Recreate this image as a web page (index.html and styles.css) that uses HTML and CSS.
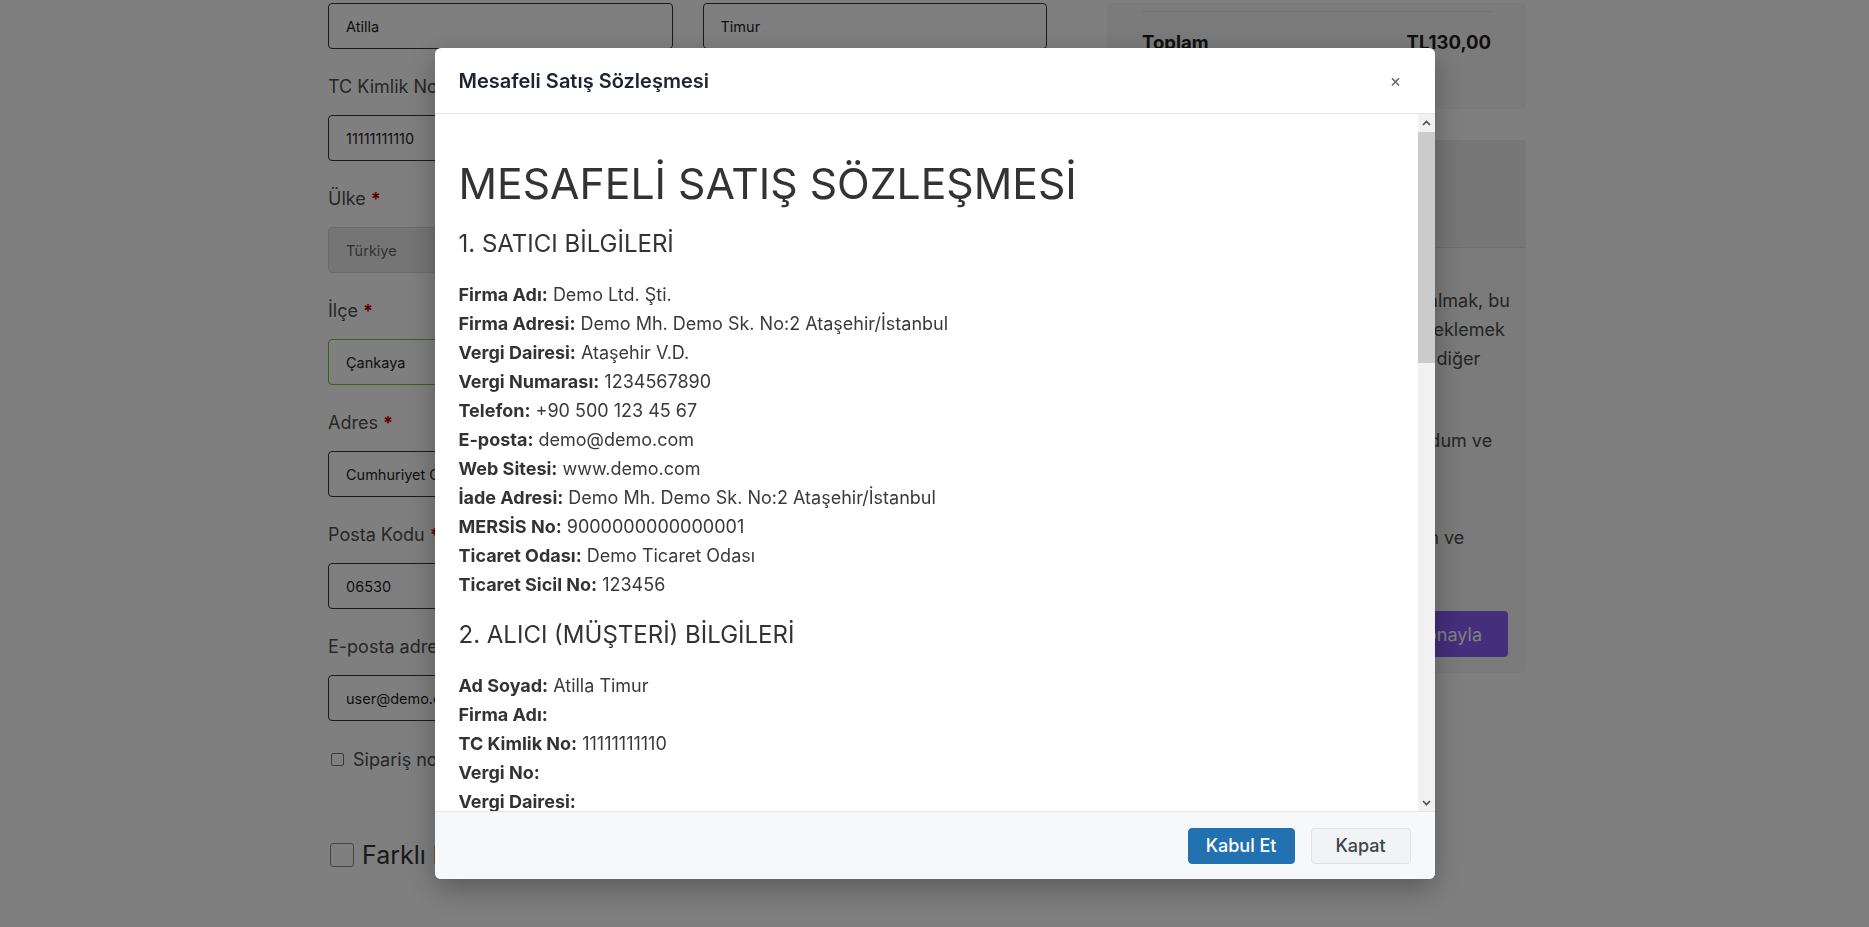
FILE: index.html
```
<!doctype html>
<html lang="tr">
  <head>
    <meta charset="UTF-8" />
    <meta name="viewport" content="width=device-width, initial-scale=1.0" />
    <title>Ödeme</title>

    <link rel="stylesheet" href="styles.css">
  </head>

  <body>
    <div class="checkout">
      <form class="billing">
        <div class="name-row">
          <input class="field-input" type="text" value="Atilla" />
          <input class="field-input" type="text" value="Timur" />
        </div>

        <div class="field">
          <label>TC Kimlik No (bireysel siparişler için)</label>
          <input class="field-input" type="text" value="11111111110" />
        </div>

        <div class="field">
          <label>Ülke <abbr class="required">*</abbr></label>
          <input class="field-input is-disabled" type="text" value="Türkiye" disabled />
        </div>

        <div class="field">
          <label>İlçe <abbr class="required">*</abbr></label>
          <input class="field-input is-valid" type="text" value="Çankaya" />
        </div>

        <div class="field">
          <label>Adres <abbr class="required">*</abbr></label>
          <input class="field-input" type="text" value="Cumhuriyet Coşkun Sk. No:12 Daire:4" />
        </div>

        <div class="field">
          <label>Posta Kodu <abbr class="required">*</abbr></label>
          <input class="field-input" type="text" value="06530" />
        </div>

        <div class="field">
          <label>E-posta adresi <abbr class="required">*</abbr></label>
          <input class="field-input" type="text" value="user@demo.com" />
        </div>

        <label class="check-row">
          <input class="check-small" type="checkbox" />
          <span>Sipariş notu eklemek istiyorum</span>
        </label>

        <label class="ship-row">
          <input class="check-big" type="checkbox" />
          <span>Farklı bir adrese gönderilsin mi?</span>
        </label>
      </form>

      <aside class="sidebar">
        <div class="card totals">
          <div class="total-row">
            <span>Toplam</span>
            <span>TL130,00</span>
          </div>
        </div>

        <div class="card payment">
          <div class="payment-head"></div>
          <div class="payment-body">
            <p class="privacy">
              Kişisel verileriniz siparişinizi işleme almak, bu<br />
              web sitesi içindeki deneyiminizi desteklemek<br />
              ve gizlilik politikamızda da açıklanan diğer<br />
              amaçlarla kullanılacaktır.
            </p>
            <p class="terms">
              Web site şartlarını ve koşullarını okudum ve<br />
              kabul ediyorum.
            </p>
            <p class="terms terms-second">
              Mesafeli Satış Sözleşmesi'ni okudum ve<br />
              kabul ediyorum.
            </p>
            <div class="place-order">
              <button type="button">Siparişi onayla</button>
            </div>
          </div>
        </div>
      </aside>
    </div>

    <div class="backdrop"></div>

    <div class="modal">
      <div class="modal-dialog">
        <div class="modal-header">
          <h5 class="modal-title">Mesafeli Satış Sözleşmesi</h5>
          <button class="modal-close" type="button">&times;</button>
        </div>

        <div class="modal-body">
          <div class="contract">
            <h1>MESAFELİ SATIŞ SÖZLEŞMESİ</h1>

            <h2>1. SATICI BİLGİLERİ</h2>
            <p>
              <strong>Firma Adı:</strong> Demo Ltd. Şti.<br />
              <strong>Firma Adresi:</strong> Demo Mh. Demo Sk. No:2 Ataşehir/İstanbul<br />
              <strong>Vergi Dairesi:</strong> Ataşehir V.D.<br />
              <strong>Vergi Numarası:</strong> 1234567890<br />
              <strong>Telefon:</strong> +90 500 123 45 67<br />
              <strong>E-posta:</strong> demo@demo.com<br />
              <strong>Web Sitesi:</strong> www.demo.com<br />
              <strong>İade Adresi:</strong> Demo Mh. Demo Sk. No:2 Ataşehir/İstanbul<br />
              <strong>MERSİS No:</strong> 9000000000000001<br />
              <strong>Ticaret Odası:</strong> Demo Ticaret Odası<br />
              <strong>Ticaret Sicil No:</strong> 123456
            </p>

            <h2>2. ALICI (MÜŞTERİ) BİLGİLERİ</h2>
            <p>
              <strong>Ad Soyad:</strong> Atilla Timur<br />
              <strong>Firma Adı:</strong><br />
              <strong>TC Kimlik No:</strong> 11111111110<br />
              <strong>Vergi No:</strong><br />
              <strong>Vergi Dairesi:</strong><br />
              <strong>Adres:</strong> Cumhuriyet Coşkun Sk. No:12 Daire:4 Çankaya/Ankara<br />
              <strong>Telefon:</strong> +90 555 111 22 33<br />
              <strong>E-posta:</strong> user@demo.com
            </p>

            <h2>3. SÖZLEŞMENİN KONUSU</h2>
            <p>
              İşbu sözleşmenin konusu, ALICI'nın SATICI'ya ait internet sitesinden elektronik ortamda
              siparişini verdiği ürünün satışı ve teslimi ile ilgili olarak tarafların hak ve
              yükümlülüklerinin belirlenmesidir.
            </p>
          </div>

          <div class="scrollbar">
            <span class="scroll-btn">
              <svg width="9" height="6" viewBox="0 0 9 6"><polyline points="1,5 4.5,1.5 8,5" /></svg>
            </span>
            <span class="scroll-track">
              <span class="scroll-thumb"></span>
            </span>
            <span class="scroll-btn">
              <svg width="9" height="6" viewBox="0 0 9 6"><polyline points="1,1 4.5,4.5 8,1" /></svg>
            </span>
          </div>
        </div>

        <div class="modal-footer">
          <button class="btn btn-primary" type="button">Kabul Et</button>
          <button class="btn btn-secondary" type="button">Kapat</button>
        </div>
      </div>
    </div>
  </body>
</html>
```

FILE: styles.css
```
:root {
  --font: 'Inter', 'Noto Sans', 'Liberation Sans', sans-serif;
  --text-color: #333333;
  --label-color: #4e4e4e;
  --input-border: #343434;
  --card-bg: #f6f6f6;
  --woo-purple: #8b5cf6;
  --wp-blue: #2271b1;
  --modal-border: #e4e6ea;
  --footer-bg: #f7f8fa;
  --radius-sm: 4px;
  --radius-md: 6px;
}

* {
  box-sizing: border-box;
}

html,
body {
  margin: 0;
  padding: 0;
  height: 100%;
}

body {
  background-color: #ffffff;
  font-family: var(--font);
  color: var(--text-color);
  overflow: hidden;
}

/* checkout page behind the dialog */

.checkout {
  display: flex;
  gap: 60px;
  margin-left: 328px;
  padding-top: 3px;
}

.billing {
  width: 719px;
}

.name-row {
  display: flex;
  gap: 30px;
}

.name-row .field-input {
  flex: 1;
  min-width: 0;
}

.field {
  margin-top: 24px;
}

.field label {
  display: block;
  font-size: 18px;
  line-height: 27px;
  margin-bottom: 15px;
  color: var(--label-color);
  white-space: nowrap;
}

.required {
  color: #c40000;
  text-decoration: none;
  font-weight: 700;
}

.field-input {
  display: block;
  width: 100%;
  height: 46px;
  padding: 0 17px;
  border: 1px solid var(--input-border);
  border-radius: var(--radius-sm);
  background: #ffffff;
  font-family: var(--font);
  font-size: 14.5px;
  color: #1e1e1e;
}

.field-input.is-disabled {
  background: #ebebeb;
  border-color: #d6d6d6;
  color: #666666;
}

.field-input.is-valid {
  border-color: #6dc22e;
}

.check-row {
  display: flex;
  align-items: center;
  gap: 9px;
  margin-top: 25px;
  font-size: 18px;
  line-height: 27px;
  color: var(--label-color);
}

.check-small {
  appearance: none;
  width: 13px;
  height: 13px;
  margin: 0 0 0 3px;
  border: 1px solid #767676;
  border-radius: 2px;
  background: #ffffff;
}

.ship-row {
  display: flex;
  align-items: center;
  gap: 8px;
  margin-top: 64px;
  font-size: 25px;
  line-height: 36px;
  color: #333333;
}

.check-big {
  appearance: none;
  width: 24px;
  height: 24px;
  margin: 0 0 0 2px;
  border: 1px solid #8a8a8a;
  border-radius: 3px;
  background: #ffffff;
}

.sidebar {
  width: 419px;
}

.card {
  background: var(--card-bg);
  border-radius: var(--radius-sm);
}

.totals {
  padding: 8px 35px 54px;
}

.total-row {
  display: flex;
  justify-content: space-between;
  border-top: 1px solid #e0e0e0;
  padding-top: 18px;
  font-size: 18.5px;
  line-height: 25px;
  font-weight: 700;
  color: #1f1f1f;
}

.payment {
  margin-top: 31px;
  overflow: hidden;
}

.payment-head {
  height: 108px;
  background: #eeeeee;
  border-bottom: 1px solid #dcdcdc;
}

.payment-body {
  padding: 38px 18px 16px;
  font-size: 18px;
  line-height: 29px;
  color: #4a4a4a;
}

.payment-body p {
  margin: 0;
  white-space: nowrap;
}

.payment-body .terms {
  margin-top: 24px;
}

.payment-body .terms-second {
  margin-top: 39px;
}

.place-order {
  display: flex;
  justify-content: flex-end;
  margin-top: 30px;
}

.place-order button {
  height: 46px;
  padding: 0 26px;
  border: 0;
  border-radius: var(--radius-sm);
  background: var(--woo-purple);
  color: #ffffff;
  font-family: var(--font);
  font-size: 18px;
}

/* dialog */

.backdrop {
  position: fixed;
  inset: 0;
  background: rgba(0, 0, 0, 0.5);
}

.modal {
  position: fixed;
  inset: 0;
  display: flex;
  justify-content: center;
  align-items: flex-start;
  padding-top: 48px;
}

.modal-dialog {
  width: 1000px;
  height: 831px;
  display: flex;
  flex-direction: column;
  background: #ffffff;
  border-radius: var(--radius-md);
  box-shadow: 0 10px 30px rgba(0, 0, 0, 0.3);
  overflow: hidden;
}

.modal-header {
  height: 66px;
  flex-shrink: 0;
  display: flex;
  align-items: center;
  justify-content: space-between;
  padding: 0 24px;
  border-bottom: 1px solid var(--modal-border);
}

.modal-title {
  margin: 0;
  font-size: 20px;
  font-weight: 600;
  color: #1d2433;
}

.modal-close {
  width: 30px;
  height: 30px;
  padding: 0;
  border: 0;
  background: none;
  font-family: var(--font);
  font-size: 18px;
  line-height: 30px;
  color: #646970;
}

.modal-body {
  flex: 1;
  min-height: 0;
  display: flex;
}

.contract {
  flex: 1;
  overflow: hidden;
  padding: 24px;
  color: var(--text-color);
}

.contract h1 {
  margin: 20px 0 0;
  font-size: 42.7px;
  font-weight: 400;
  line-height: 1.2;
}

.contract h2 {
  margin: 21px 0;
  font-size: 24px;
  font-weight: 400;
  line-height: 1.2;
}

.contract p {
  margin: 0 0 22px;
  font-size: 18px;
  line-height: 29px;
  color: #3a3a3a;
}

.contract strong {
  font-weight: 700;
  color: #333333;
}

.scrollbar {
  width: 17px;
  flex-shrink: 0;
  display: flex;
  flex-direction: column;
  background: #f1f1f1;
}

.scroll-btn {
  height: 17px;
  display: flex;
  align-items: center;
  justify-content: center;
}

.scroll-btn svg polyline {
  fill: none;
  stroke: #505050;
  stroke-width: 1.6;
}

.scroll-track {
  flex: 1;
  padding-top: 1px;
}

.scroll-thumb {
  display: block;
  height: 231px;
  background: #cbcbcb;
}

.modal-footer {
  height: 68px;
  flex-shrink: 0;
  display: flex;
  align-items: center;
  justify-content: flex-end;
  gap: 16px;
  padding: 0 24px;
  background: var(--footer-bg);
  border-top: 1px solid var(--modal-border);
}

.btn {
  height: 36px;
  padding: 0 17px;
  border-radius: var(--radius-sm);
  font-family: var(--font);
  font-size: 18px;
  font-weight: 500;
}

.btn-primary {
  border: 1px solid var(--wp-blue);
  background: var(--wp-blue);
  color: #ffffff;
}

.btn-secondary {
  min-width: 100px;
  border: 1px solid #dfe1e5;
  background: #f2f3f5;
  color: #3c434a;
}
```
